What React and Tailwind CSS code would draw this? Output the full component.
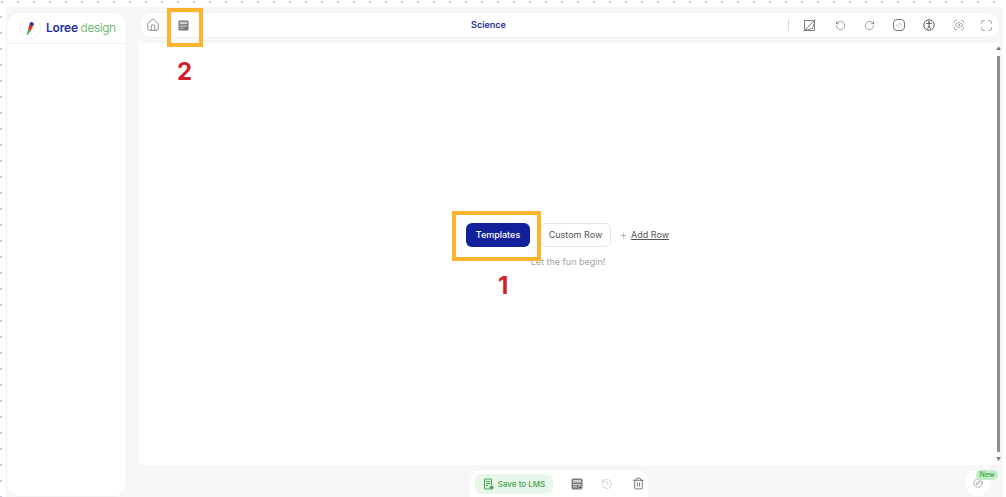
import { House, RotateCcw, RotateCw, CodeXml, ScanEye, Maximize, History, Trash2, Compass, Plus } from 'lucide-react';

const dots = Array.from({ length: 64 });
const sideDots = Array.from({ length: 31 });

function ArchiveIcon({ size = 12, className = '', badge = false }) {
  return (
    <svg width={size} height={size} viewBox="0 0 12 12" className={className}>
      <rect x="0.5" y="0.5" width="11" height="11" rx="1.5" fill="#7a7a7a" />
      <rect x="2" y="2" width="8" height="2.5" fill="#cfcfcf" />
      <rect x="2" y="6" width="8" height="1.2" fill="#cfcfcf" />
      <rect x="2" y="8.4" width="4" height="1" fill="#cfcfcf" />
      {badge && <circle cx="9.5" cy="9.5" r="1.6" fill="#444" stroke="#fff" strokeWidth="0.6" />}
    </svg>
  );
}

function NoFill() {
  return (
    <svg width="13" height="13" viewBox="0 0 13 13" fill="none" stroke="#777" strokeWidth="0.9">
      <rect x="1.5" y="1.5" width="10" height="10" />
      <path d="M0.5 12.5 12.5 0.5M1.5 11.5l8-2 2-6" />
    </svg>
  );
}

function AccessIcon() {
  return (
    <svg width="12" height="12" viewBox="0 0 12 12" fill="none" stroke="#555" strokeWidth="1">
      <circle cx="6" cy="6" r="5.2" />
      <path d="M3.2 4.4h5.6M6 4.4v3M6 7.2 4.6 9.6M6 7.2l1.4 2.4" />
      <circle cx="6" cy="2.9" r="0.5" fill="#555" />
    </svg>
  );
}

function SaveIcon() {
  return (
    <svg width="11" height="12" viewBox="0 0 11 12" fill="none" stroke="#3fa34d" strokeWidth="1">
      <path d="M7 11H1.5V1h7v6" />
      <path d="M3 3.5h4M3 5.5h4M3 7.5h2" />
      <circle cx="8.5" cy="9.5" r="1.6" fill="#3fa34d" />
    </svg>
  );
}

function Logo() {
  return (
    <div className="w-[22px] h-[22px] rounded-full border border-[#eef0f6] flex items-center justify-center">
      <svg width="9" height="13" viewBox="0 0 9 13">
        <path d="M4.5 0c2.4 0 3.6 1 3.6 2.6L5.6 5.5 3.4 2z" fill="#2b3aa8" />
        <path d="M3.4 2 6.4 5 4.6 9.2 2 8z" fill="#d8342f" />
        <path d="M2 7.6l2.4 1.4L1.6 13H0.6z" fill="#3fae49" />
        <path d="M6.4 3.6 8 4.8 6 7.2z" fill="#f2b632" />
      </svg>
    </div>
  );
}

export default function App() {
  return (
    <div className="relative w-[1006px] h-[497px] overflow-hidden bg-white flex flex-col font-['Inter',sans-serif]">
      <div className="h-[7px] flex gap-[14px] pl-[1px] pt-[1px]">
        {dots.map((_, i) => (
          <span key={i} className="w-[2px] h-[2px] shrink-0 bg-[#c5c8dc]" />
        ))}
      </div>

      <div className="flex-1 flex min-h-0">
        <div className="w-[6px] flex flex-col gap-[14px] pt-[9px]">
          {sideDots.map((_, i) => (
            <span key={i} className="w-[2px] h-[2px] shrink-0 bg-[#c5c8dc]" />
          ))}
        </div>

        <div className="flex-1 flex gap-3 bg-[#f7f7f7] pt-[5px] pr-[3px] mr-[3px] min-w-0">
          <aside className="w-[121px] bg-white rounded-xl border border-[#f1f1f1] shrink-0">
            <div className="h-[31px] border-b border-[#f0f0f0] flex items-center pl-3 gap-[5px]">
              <Logo />
              <span className="text-[12px] font-semibold text-[#25309e] tracking-[-0.2px]">
                Loree <span className="font-light text-[#4fb04f] tracking-[-0.4px]">design</span>
              </span>
            </div>
          </aside>

          <div className="flex-1 flex flex-col min-w-0">
            <div className="h-[26px] bg-white rounded-xl border border-[#f1f1f1] flex items-center pl-[6px] pr-[6px] shrink-0">
              <House size={14} strokeWidth={1.2} className="text-[#666]" />
              <ArchiveIcon size={11} className="ml-[18px]" />
              <span className="flex-1 text-center text-[9px] font-semibold text-[#25309e]">Science</span>
              <span className="w-px h-[12px] bg-[#d8d8d8] mr-[14px]" />
              <div className="flex items-center gap-[18px]">
                <NoFill />
                <RotateCcw size={11} strokeWidth={1.2} className="ml-px text-[#555]" />
                <RotateCw size={11} strokeWidth={1.2} className="text-[#555]" />
                <CodeXml size={12} strokeWidth={1} className="text-[#555] border border-[#777] rounded-sm p-[1.5px]" />
                <AccessIcon />
                <ScanEye size={12} strokeWidth={1.1} className="text-[#666]" />
                <Maximize size={13} strokeWidth={1} className="-ml-[3px] text-[#555]" />
              </div>
            </div>

            <div className="mt-[5px] h-[422px] bg-white flex shrink-0">
              <div className="flex-1 flex flex-col items-center pt-[180px]">
                <div className="flex items-center gap-[11px] pr-[1px]">
                  <button className="w-[64px] h-[24px] rounded-md bg-[#12219b] text-white text-[9px] font-medium">
                    Templates
                  </button>
                  <button className="w-[71px] h-[24px] -ml-[1px] rounded-md border border-[#e5e5e5] bg-white text-[#555] text-[9px]">
                    Custom Row
                  </button>
                  <span className="flex items-center gap-[3px] text-[9px] text-[#555] -ml-[3px]">
                    <Plus size={9} strokeWidth={1} />
                    <span className="underline">Add Row</span>
                  </span>
                </div>
                <p className="mt-[8px] text-[9px] text-[#a5a5a5]">Let the fun begin!</p>
              </div>
              <div className="w-[3px] flex flex-col items-center justify-between py-[3px]">
                <span className="text-[5px] leading-[5px] text-[#777]">▲</span>
                <span className="w-[3px] h-[396px] shrink-0 bg-[#8f8f8f]" />
                <span className="text-[5px] leading-[5px] text-[#777]">▼</span>
              </div>
            </div>

            <div className="flex-1 relative flex justify-center pt-[5px] min-h-0">
              <div className="h-[27px] w-[178px] mr-[21px] bg-white rounded-t-xl flex items-center pl-[5px] gap-[18px]">
                <button className="h-[20px] w-[78px] rounded-md bg-[#e9f6ea] flex items-center justify-center gap-[4px] text-[8px] font-medium text-[#3fa34d]">
                  <SaveIcon />
                  Save to LMS
                </button>
                <ArchiveIcon size={12} badge />
                <History size={12} strokeWidth={1} className="text-[#aaa]" />
                <Trash2 size={13} strokeWidth={1.4} className="ml-px text-[#555]" />
              </div>
              <div className="absolute right-[9px] top-[5px] w-[26px] h-[26px] rounded-full bg-white flex items-center justify-center">
                <Compass size={10} strokeWidth={1.2} className="text-[#666]" />
                <span className="absolute top-0 -right-[7px] h-[10px] w-[22px] text-center rounded-full bg-[#c4ecc8] text-[#4caf50] text-[7px] leading-[10px] font-semibold">New</span>
              </div>
            </div>
          </div>
        </div>
      </div>

      <div className="absolute left-[167px] top-[8px] w-[36px] h-[39px] border-[4px] border-[#fbb42c]" />
      <div className="absolute left-[452px] top-[211px] w-[89px] h-[50px] border-[4px] border-[#fbb42c]" />
      <span className="absolute left-[177px] top-[58px] text-[24px] leading-[28px] font-bold text-[#cf1f2a]">2</span>
      <span className="absolute left-[498px] top-[272px] text-[24px] leading-[28px] font-bold text-[#cf1f2a]">1</span>
    </div>
  );
}
